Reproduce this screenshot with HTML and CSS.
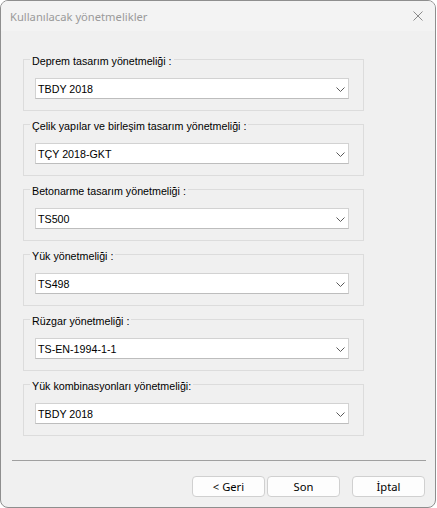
FILE: index.html
```html
<!DOCTYPE html>
<html lang="tr">
<head>
    <meta charset="UTF-8">
    <meta name="viewport" content="width=device-width, initial-scale=1.0">
    <title>Kullanılacak yönetmelikler</title>
    <link rel="stylesheet" href="styles.css">
</head>
<body>
    <div class="window">
        <div class="titlebar">
            <span class="title">Kullanılacak yönetmelikler</span>
            <svg class="close" width="10" height="10" viewBox="0 0 10 10">
                <path d="M0.5 0.5 L9.5 9.5 M9.5 0.5 L0.5 9.5" stroke="#8a8a8a" stroke-width="1" fill="none"/>
            </svg>
        </div>

        <div class="content">
            <div class="group">
                <span class="group-label">Deprem tasarım yönetmeliği :</span>
                <div class="combo"><span>TBDY 2018</span><svg class="chevron" width="9" height="5" viewBox="0 0 9 5"><path d="M0.5 0.5 L4.5 4.5 L8.5 0.5" stroke="#5a5a5a" fill="none"/></svg></div>
            </div>
            <div class="group">
                <span class="group-label">Çelik yapılar ve birleşim tasarım yönetmeliği :</span>
                <div class="combo"><span>TÇY 2018-GKT</span><svg class="chevron" width="9" height="5" viewBox="0 0 9 5"><path d="M0.5 0.5 L4.5 4.5 L8.5 0.5" stroke="#5a5a5a" fill="none"/></svg></div>
            </div>
            <div class="group">
                <span class="group-label">Betonarme tasarım yönetmeliği :</span>
                <div class="combo"><span>TS500</span><svg class="chevron" width="9" height="5" viewBox="0 0 9 5"><path d="M0.5 0.5 L4.5 4.5 L8.5 0.5" stroke="#5a5a5a" fill="none"/></svg></div>
            </div>
            <div class="group">
                <span class="group-label">Yük yönetmeliği :</span>
                <div class="combo"><span>TS498</span><svg class="chevron" width="9" height="5" viewBox="0 0 9 5"><path d="M0.5 0.5 L4.5 4.5 L8.5 0.5" stroke="#5a5a5a" fill="none"/></svg></div>
            </div>
            <div class="group">
                <span class="group-label">Rüzgar yönetmeliği :</span>
                <div class="combo"><span>TS-EN-1994-1-1</span><svg class="chevron" width="9" height="5" viewBox="0 0 9 5"><path d="M0.5 0.5 L4.5 4.5 L8.5 0.5" stroke="#5a5a5a" fill="none"/></svg></div>
            </div>
            <div class="group">
                <span class="group-label">Yük kombinasyonları yönetmeliği:</span>
                <div class="combo"><span>TBDY 2018</span><svg class="chevron" width="9" height="5" viewBox="0 0 9 5"><path d="M0.5 0.5 L4.5 4.5 L8.5 0.5" stroke="#5a5a5a" fill="none"/></svg></div>
            </div>
        </div>

        <div class="separator"></div>

        <div class="buttons">
            <button class="btn">&lt; Geri</button>
            <button class="btn">Son</button>
            <button class="btn btn-cancel">İptal</button>
        </div>
    </div>
</body>
</html>
```

FILE: styles.css
```css
body {
    margin: 0;
    background: #ffffff;
    font-family: "Liberation Sans", Arial, sans-serif;
    font-size: 10.7px;
    color: #000000;
}

.window {
    width: 436px;
    height: 508px;
    box-sizing: border-box;
    border: 1px solid #8e8e8e;
    border-radius: 8px;
    background: #f0f0f0;
    overflow: hidden;
}

.titlebar {
    height: 30px;
    background: #f3f3f3;
    display: flex;
    align-items: center;
    justify-content: space-between;
    padding: 0 9px 0 9px;
}

.title {
    color: #9a9a9a;
    font-family: "Noto Sans", sans-serif;
    font-size: 11.2px;
}

.close {
    margin-right: 3px;
}

.content {
    padding: 28px 0 0 22px;
    display: flex;
    flex-direction: column;
    gap: 13px;
}

.group {
    width: 341px;
    box-sizing: border-box;
    border: 1px solid #dcdcdc;
    padding: 0 14px 11px 11px;
    display: flex;
    flex-direction: column;
    align-items: flex-start;
}

.group-label {
    margin: -7px 0 0 -5px;
    padding: 0 2px;
    line-height: 16px;
    background: #f0f0f0;
}

.combo {
    margin-top: 9px;
    width: 100%;
    height: 21px;
    box-sizing: border-box;
    background: #ffffff;
    border: 1px solid #d2d2d2;
    border-bottom-color: #bdbdbd;
    display: flex;
    align-items: center;
    justify-content: space-between;
    padding: 0 3px 0 2px;
}

.chevron {
    margin-top: 1px;
}

.separator {
    margin: 24px 9px 0 11px;
    border-top: 1px solid #a0a0a0;
}

.buttons {
    display: flex;
    justify-content: flex-end;
    gap: 2px;
    padding: 15px 10px 0 0;
}

.btn {
    width: 73px;
    height: 21px;
    box-sizing: border-box;
    background: #fdfdfd;
    border: 1px solid #d0d0d0;
    border-radius: 4px;
    font-family: "Noto Sans", sans-serif;
    font-size: 11.2px;
    color: #000000;
    padding: 0;
}

.btn-cancel {
    margin-left: 10px;
}
```
